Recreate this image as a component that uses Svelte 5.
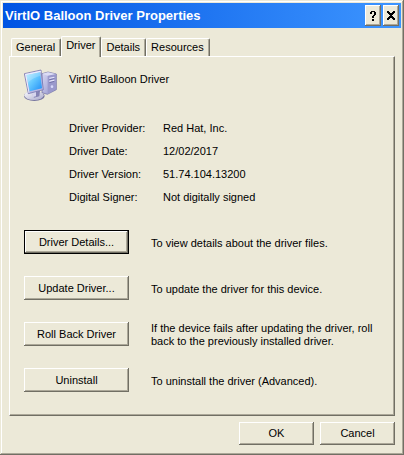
<script lang="ts">
  type Action = { label: string; text: string };

  const tabs = ['General', 'Driver', 'Details', 'Resources'];

  const info = [
    ['Driver Provider:', 'Red Hat, Inc.'],
    ['Driver Date:', '12/02/2017'],
    ['Driver Version:', '51.74.104.13200'],
    ['Digital Signer:', 'Not digitally signed'],
  ];

  const actions: Action[] = [
    { label: 'Driver Details...', text: 'To view details about the driver files.' },
    { label: 'Update Driver...', text: 'To update the driver for this device.' },
    {
      label: 'Roll Back Driver',
      text: 'If the device fails after updating the driver, roll back to the previously installed driver.',
    },
    { label: 'Uninstall', text: 'To uninstall the driver (Advanced).' },
  ];

  let active = $state('Driver');
  let focused = $state('Driver Details...');
</script>

<div class="window" role="dialog" aria-labelledby="title">
  <header>
    <h1 id="title">VirtIO Balloon Driver Properties</h1>
    <button type="button" class="caption" aria-label="Help">
      <svg width="6" height="10" viewBox="0 0 6 10" shape-rendering="crispEdges" aria-hidden="true">
        <path d="M1 0h4v1h1v3H5v1H4v2H2V5h1V4h1V1H2v2H0V1h1zM2 8h2v2H2z" />
      </svg>
    </button>
    <button type="button" class="caption" aria-label="Close">
      <svg width="8" height="9" viewBox="0 0 8 9" shape-rendering="crispEdges" aria-hidden="true">
        <path d="M0 0h2v1h1v1h2V1h1V0h2v2H7v1H6v1H5v1h1v1h1v1h1v2H6V8H5V7H3v1H2v1H0V7h1V6h1V5h1V4H2V3H1V2H0z" />
      </svg>
    </button>
  </header>

  <div class="content">
    <div class="tabs" role="tablist">
      {#each tabs as tab (tab)}
        <button
          type="button"
          role="tab"
          class="tab"
          class:active={tab === active}
          aria-selected={tab === active}
          onclick={() => (active = tab)}
        >{tab}</button>
      {/each}
    </div>

    <section class="panel" role="tabpanel" aria-label={active}>
      <div class="device">
        <svg width="33" height="33" viewBox="0 0 99 99" aria-hidden="true">
          <defs>
            <linearGradient id="screen" x1="0" y1="0" x2="1" y2="1">
              <stop offset="0" stop-color="#b4ecff" />
              <stop offset="0.45" stop-color="#65c8ff" />
              <stop offset="1" stop-color="#1f8cf6" />
            </linearGradient>
            <linearGradient id="tower" x1="0" y1="0" x2="1" y2="1">
              <stop offset="0" stop-color="#d8d8f4" />
              <stop offset="1" stop-color="#8f90c8" />
            </linearGradient>
            <linearGradient id="base" x1="0" y1="0" x2="1" y2="1">
              <stop offset="0" stop-color="#ffffff" />
              <stop offset="1" stop-color="#a9a8cc" />
            </linearGradient>
          </defs>
          <path d="M54 14 72 9 97 15v47L70 76 54 71z" fill="url(#tower)" stroke="#6a699f" stroke-width="2" />
          <path d="M71 19 96 15v46L71 75z" fill="#9a99cc" />
          <path d="M55 14 72 10 95 15 71 20z" fill="#dcdcf5" />
          <path d="M76 28 91 25M76 37l15-4" stroke="#e4e4fa" stroke-width="4" />
          <path d="M76 32 91 29M76 41l15-4" stroke="#5c5c95" stroke-width="2" />
          <circle cx="84" cy="53" r="4" fill="#d7d9fb" />
          <ellipse cx="31" cy="81" rx="31" ry="15" fill="#77769f" />
          <ellipse cx="30" cy="79" rx="29" ry="14" fill="url(#base)" />
          <path d="M22 70 48 65 46 82 30 86z" fill="#8583b4" />
          <path d="M22 70 36 67v15l-9 2z" fill="#d6d5ed" />
          <path d="M1 14 51 3 58 62 13 74z" fill="#b9b8e2" stroke="#6968a6" stroke-width="2" />
          <path d="M3 15 50 5 51 10 8 19 16 71 14 72z" fill="#ececff" />
          <path d="M7 18 48 10 54 58 17 67z" fill="url(#screen)" />
          <path d="M7 18 48 10 49 20C35 24 20 31 11 42z" fill="#ffffff" opacity="0.2" />
        </svg>
        <h2>VirtIO Balloon Driver</h2>
      </div>

      <dl>
        {#each info as [name, value] (name)}
          <dt>{name}</dt>
          <dd>{value}</dd>
        {/each}
      </dl>

      <div class="actions">
        {#each actions as action, i (action.label)}
          <div class="action">
            <button
              type="button"
              class="push"
              class:default={action.label === focused}
              aria-describedby="action-{i}"
              onclick={() => (focused = action.label)}
            >{action.label}</button>
            <p id="action-{i}">{action.text}</p>
          </div>
        {/each}
      </div>
    </section>

    <footer>
      <button type="button" class="push">OK</button>
      <button type="button" class="push">Cancel</button>
    </footer>
  </div>
</div>

<style>
  :global(body) {
    margin: 0;
    background: #ece9d8;
  }
  .window {
    --face: #ece9d8;
    --shadow: #aca899;
    --dark: #716f64;
    box-sizing: border-box;
    padding: 3px;
    background: var(--face);
    box-shadow:
      inset -1px -1px var(--dark),
      inset 1px 1px var(--face),
      inset -2px -2px var(--shadow),
      inset 2px 2px #fff;
    color: #000;
    font-family: "Liberation Sans", Arial, sans-serif;
    font-size: 11px;
    line-height: 13px;
  }
  h1, h2, p, dl, dd {
    margin: 0;
    font: inherit;
  }
  button {
    margin: 0;
    padding: 0;
    border: 0;
    background: var(--face);
    color: inherit;
    font: inherit;
  }
  header {
    display: flex;
    align-items: center;
    gap: 2px;
    height: 25px;
    padding: 0 2px;
    background: linear-gradient(to right, #0054e3, #3d95ff);
  }
  h1 {
    flex: 1;
    color: #fff;
    font-size: 13px;
    font-weight: bold;
    line-height: 20px;
    white-space: nowrap;
  }
  .caption {
    display: flex;
    align-items: center;
    justify-content: center;
    width: 16px;
    height: 21px;
  }
  .caption, .push {
    box-shadow:
      inset -1px -1px var(--dark),
      inset 1px 1px #fff,
      inset -2px -2px var(--shadow);
  }
  .content {
    padding: 8px 6px 7px;
  }
  .tabs {
    display: flex;
    align-items: flex-end;
    padding-left: 2px;
  }
  .tab {
    height: 18px;
    padding: 0 5px 0 4px;
    border: solid;
    border-width: 1px 1px 0;
    border-color: #fff var(--dark) #fff #fff;
    border-radius: 2px 2px 0 0;
    box-shadow: inset -1px 0 var(--shadow);
  }
  .tab.active {
    position: relative;
    height: 21px;
    margin-bottom: -1px;
    padding-bottom: 3px;
  }
  .panel {
    padding: 12px 13px 23px 14px;
    border: 1px solid;
    border-color: #fff var(--dark) var(--dark) #fff;
    box-shadow: inset -1px -1px var(--shadow);
  }
  .device {
    display: flex;
    gap: 12px;
  }
  h2 {
    padding-top: 4px;
  }
  dl {
    display: grid;
    grid-template-columns: 94px 1fr;
    row-gap: 10px;
    padding: 20px 0 0 45px;
  }
  .actions {
    display: grid;
    gap: 22px;
    padding-top: 26px;
  }
  .action {
    display: flex;
    align-items: center;
    gap: 22px;
    height: 24px;
  }
  .action .push {
    flex: none;
    width: 105px;
    height: 24px;
  }
  .action p {
    flex: 1;
    padding-top: 2px;
  }
  .push.default {
    border: 1px solid #000;
  }
  .push:focus-visible {
    outline: 1px dotted #000;
    outline-offset: -4px;
  }
  footer {
    display: flex;
    justify-content: flex-end;
    gap: 6px;
    padding-top: 6px;
  }
  footer .push {
    width: 75px;
    height: 23px;
  }
</style>
